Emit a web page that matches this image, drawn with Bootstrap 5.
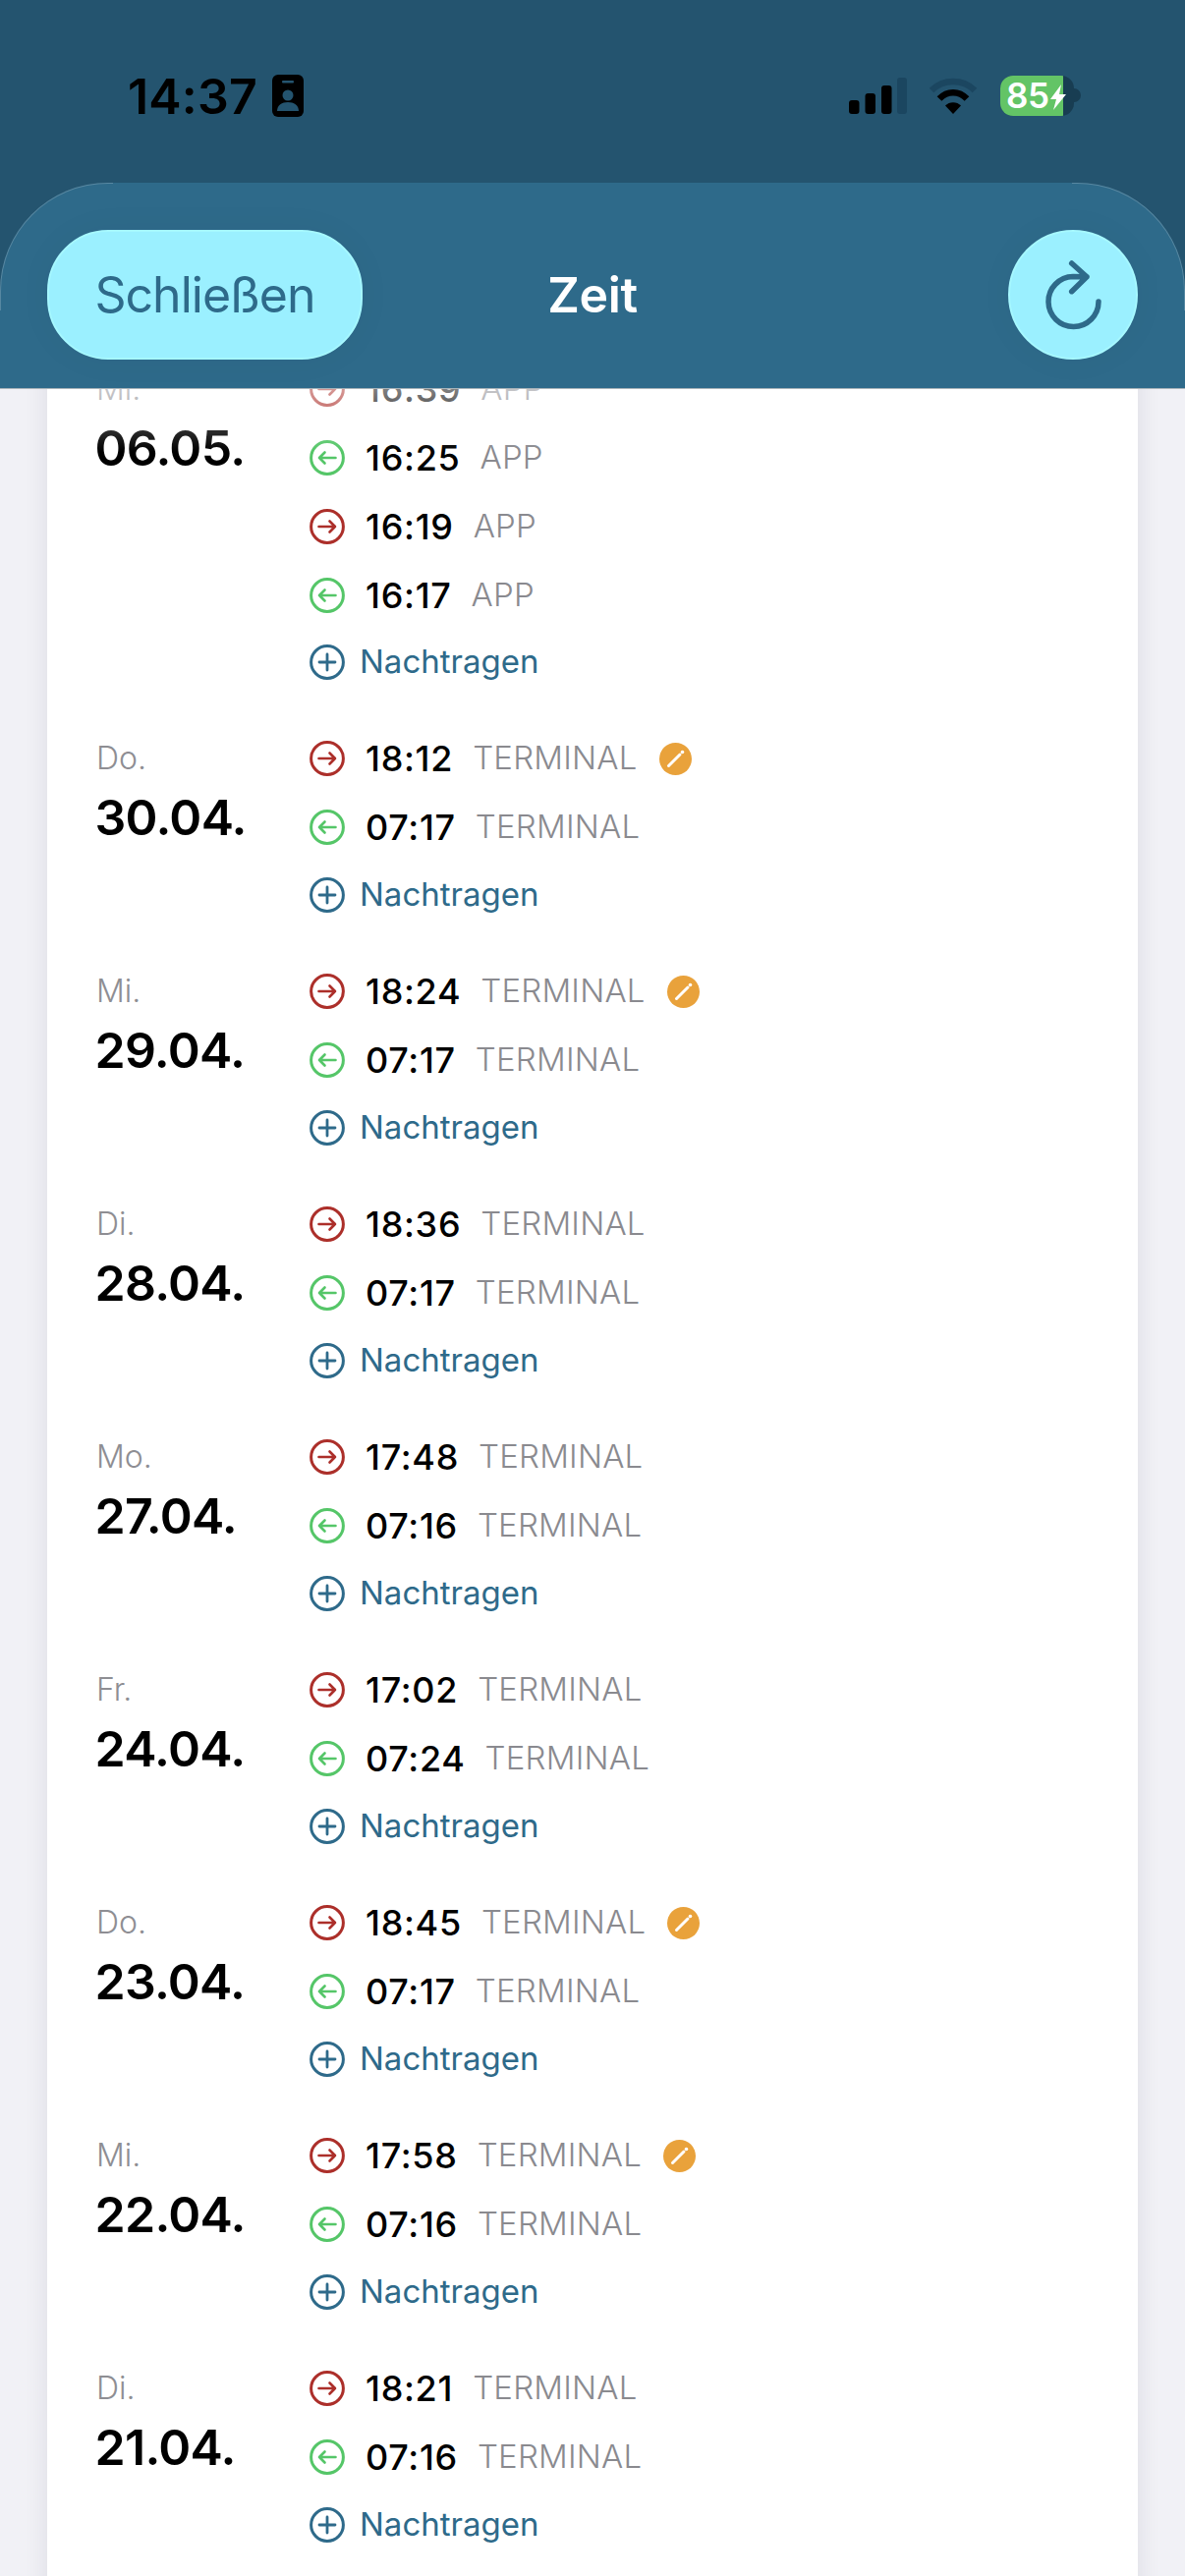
<!DOCTYPE html>
<html lang="de">
<head>
<meta charset="UTF-8" />
<meta name="viewport" content="width=device-width, initial-scale=1" />
<title>Zeit</title>
<link href="https://cdn.jsdelivr.net/npm/bootstrap@5.3.0/dist/css/bootstrap.min.css" rel="stylesheet" />
<style>
    html, body { height: 2622px; overflow: hidden; }
    body { background: #f1f1f6; font-family: Inter, "Liberation Sans", sans-serif; color: #000; }
    .status-bar { background: #24546f; height: 186px; padding: 76px 106px 0 130px; }
    .clock { font-size: 50px; font-weight: 600; line-height: 44px; letter-spacing: .2px; width: 147px; }
    .batt { width: 75px; height: 41px; border-radius: 13px; overflow: hidden; background: #183d52; margin-top: 1px; }
    .batt-fill { position: absolute; left: 0; top: 0; bottom: 0; width: 64px; background: #63c466; }
    .batt-num { position: relative; color: #fff; font-size: 35px; font-weight: 600; line-height: 41px; padding-left: 6px; letter-spacing: -.5px; }
    .batt-bolt { position: absolute; left: 50px; top: 9px; }
    .batt-wrap { position: relative; }
    .batt-nub { width: 7px; height: 14px; background: #183d52; border-radius: 0 7px 7px 0; margin: 14px 0 0 0; }
    .head-panel { background: #2e6a8a; height: 210px; border-radius: 110px 110px 0 0; padding: 48px 48px 0; position: relative; border-bottom: 1px solid #a9b4ba; z-index: 3; }
    .status-wrap { background: #24546f; position: relative; z-index: 3; }
    .head-panel::before, .head-panel::after { content: ""; position: absolute; top: 0; width: 115px; height: 130px; border-top: 1px solid rgba(255,255,255,.2); }
    .head-panel::before { left: 0; border-left: 1px solid rgba(255,255,255,.2); border-top-left-radius: 110px; }
    .head-panel::after { right: 0; border-right: 1px solid rgba(255,255,255,.2); border-top-right-radius: 110px; }
    .head-grid { display: grid; grid-template-columns: 1fr auto 1fr; align-items: center; }
    .btn-close-pill { background: #9bf0ff; border: 2px solid #a6f8ff; color: #2e6a8a; width: 321px; height: 132px; border-radius: 62px; font-size: 50px; font-weight: 400; padding: 0; letter-spacing: -1px; box-shadow: 0 0 40px rgba(0,0,0,.03); }
    .btn-close-pill:hover { background: #9bf0ff; border-color: #a6f8ff; color: #2e6a8a; }
    .btn-refresh { background: #9bf0ff; border: 2px solid #a6f8ff; width: 132px; height: 132px; padding: 0; box-shadow: 0 0 40px rgba(0,0,0,.03); }
    .btn-refresh:hover { background: #9bf0ff; border-color: #a6f8ff; }
    .head-title { color: #fff; font-size: 50px; font-weight: 600; line-height: 60px; letter-spacing: -.4px; }
    .content-clip { height: 2226px; overflow: hidden; position: relative; padding: 0 48px; }
    .top-haze { position: absolute; left: 48px; right: 48px; top: 0; height: 64px; background: linear-gradient(rgba(255,255,255,.5), rgba(255,255,255,0)); z-index: 2; }
    .day-card { margin-top: -35px; padding-left: 50px; box-shadow: 0 0 24px rgba(0,0,40,.09); min-height: 2400px; }
    .day-block { padding-bottom: 29px; }
    .day-left { width: 217px; flex: none; }
    .day-name { font-size: 32px; line-height: 70px; font-weight: 300; color: #8e8e93; height: 70px; }
    .day-date { font-size: 50px; line-height: 50px; font-weight: 600; letter-spacing: -.7px; margin-left: -1.500px; }
    .stamp { height: 70px; }
    .stamp-add { height: 68px; color: #2e6a8a; }
    .stamp-last { height: 69px; }
    .round-ic { width: 36px; height: 36px; flex: none; }
    .stamp-time { font-size: 36px; font-weight: 500; margin-left: 21px; letter-spacing: .7px; }
    .stamp-src { font-size: 33px; font-weight: 300; color: #8a8a8f; margin-left: 20px; letter-spacing: .2px; }
    .stamp-add span { font-size: 33px; font-weight: 400; margin-left: 15px; }
    .edit-dot { width: 33px; height: 33px; flex: none; margin-left: 22px; }
</style>
</head>
<body>

<svg width="0" height="0" class="position-absolute">
    <symbol id="ic-out" viewBox="0 0 36 36"><circle cx="18" cy="18" r="16.4" fill="none" stroke="#ac2f2a" stroke-width="3"/><path d="M9.500 18H26M20.500 12.500 26 18l-5.500 5.500" fill="none" stroke="#ac2f2a" stroke-width="2.600" stroke-linecap="round" stroke-linejoin="round"/></symbol>
    <symbol id="ic-in" viewBox="0 0 36 36"><circle cx="18" cy="18" r="16.4" fill="none" stroke="#55c668" stroke-width="3"/><path d="M26.500 18H10M15.500 12.500 10 18l5.500 5.500" fill="none" stroke="#55c668" stroke-width="2.600" stroke-linecap="round" stroke-linejoin="round"/></symbol>
    <symbol id="ic-add" viewBox="0 0 36 36"><circle cx="18" cy="18" r="16.4" fill="none" stroke="#2e6a8a" stroke-width="3"/><path d="M18 10v16M10 18h16" fill="none" stroke="#2e6a8a" stroke-width="2.800" stroke-linecap="round"/></symbol>
    <symbol id="ic-edit" viewBox="0 0 33 33"><circle cx="16.500" cy="16.500" r="16.500" fill="#e9a23b"/><path d="M9.500 23.500 21 12" stroke="#fff" stroke-width="3" stroke-linecap="round"/><circle cx="23.500" cy="9.500" r="1.800" fill="#fff"/></symbol>
</svg>

<div class="status-wrap">
    <div class="status-bar d-flex justify-content-between align-items-start">
        <div class="d-flex align-items-start">
            <span class="clock">14:37</span>
            <svg width="32" height="43" viewBox="0 0 32 43"><rect width="32" height="43" rx="6" fill="#000"/><rect x="10" y="6" width="12" height="2.500" rx="1" fill="#24546f"/><circle cx="16" cy="21" r="5.500" fill="#24546f"/><path d="M5 37c0-6 5-9 11-9s11 3 11 9H5z" fill="#24546f"/></svg>
        </div>
        <div class="d-flex align-items-start">
            <svg width="59" height="37" viewBox="0 0 59 37" style="margin-top:3px"><rect x="0" y="23" width="10.500" height="14" rx="3" fill="#000"/><rect x="16.500" y="16" width="10.500" height="21" rx="3" fill="#000"/><rect x="33" y="8" width="10.500" height="29" rx="3" fill="#000"/><rect x="49" y="0" width="10" height="37" rx="3" fill="#1b4660"/></svg>
            <svg width="50" height="37" viewBox="0 0 50 37" style="margin:3px 23px 0 22px"><path d="M3 13C15 1 35 1 47 13" fill="none" stroke="#1b4660" stroke-width="6.500"/><path d="M11 21.500C19 13 31 13 39 21.500" fill="none" stroke="#000" stroke-width="6.500"/><path d="M25 37 17 28.500C21 24 29 24 33 28.500z" fill="#000"/></svg>
            <div class="batt batt-wrap">
                <div class="batt-fill"></div>
                <div class="batt-num">85</div>
                <svg class="batt-bolt" width="18" height="26" viewBox="0 0 18 26"><path d="M12 0 1 15h6l-3 11 13-16h-7z" fill="#fff"/></svg>
            </div>
            <div class="batt-nub"></div>
        </div>
    </div>
    <div class="head-panel">
        <div class="head-grid">
            <div><button type="button" class="btn btn-close-pill">Schließen</button></div>
            <div class="head-title">Zeit</div>
            <div class="text-end">
                <button type="button" class="btn btn-refresh rounded-circle" aria-label="Aktualisieren">
                    <svg width="128" height="128" viewBox="2 2 128 128" class="d-block"><path d="M92 73A25.500 25.500 0 1 1 66 47.500L80 47.700M64.700 34 80 47.700 64.700 62.700" fill="none" stroke="#2e6a8a" stroke-width="5.500" stroke-linecap="round" stroke-linejoin="round"/></svg>
                </button>
            </div>
        </div>
    </div>
</div>

<main class="content-clip">
    <div class="top-haze"></div>
    <div class="card rounded-0 border-0 day-card">

        <div class="day-block d-flex">
            <div class="day-left"><div class="day-name">Mi.</div><div class="day-date">06.05.</div></div>
            <div>
                <div class="stamp d-flex align-items-center"><svg class="round-ic"><use href="#ic-out"/></svg><span class="stamp-time">16:39</span><span class="stamp-src">APP</span></div>
                <div class="stamp d-flex align-items-center"><svg class="round-ic"><use href="#ic-in"/></svg><span class="stamp-time">16:25</span><span class="stamp-src">APP</span></div>
                <div class="stamp d-flex align-items-center"><svg class="round-ic"><use href="#ic-out"/></svg><span class="stamp-time">16:19</span><span class="stamp-src">APP</span></div>
                <div class="stamp stamp-last d-flex align-items-center"><svg class="round-ic"><use href="#ic-in"/></svg><span class="stamp-time">16:17</span><span class="stamp-src">APP</span></div>
                <div class="stamp-add d-flex align-items-center"><svg class="round-ic"><use href="#ic-add"/></svg><span>Nachtragen</span></div>
            </div>
        </div>

        <div class="day-block d-flex">
            <div class="day-left"><div class="day-name">Do.</div><div class="day-date">30.04.</div></div>
            <div>
                <div class="stamp d-flex align-items-center"><svg class="round-ic"><use href="#ic-out"/></svg><span class="stamp-time">18:12</span><span class="stamp-src">TERMINAL</span><svg class="edit-dot"><use href="#ic-edit"/></svg></div>
                <div class="stamp d-flex align-items-center"><svg class="round-ic"><use href="#ic-in"/></svg><span class="stamp-time">07:17</span><span class="stamp-src">TERMINAL</span></div>
                <div class="stamp-add d-flex align-items-center"><svg class="round-ic"><use href="#ic-add"/></svg><span>Nachtragen</span></div>
            </div>
        </div>

        <div class="day-block d-flex">
            <div class="day-left"><div class="day-name">Mi.</div><div class="day-date">29.04.</div></div>
            <div>
                <div class="stamp d-flex align-items-center"><svg class="round-ic"><use href="#ic-out"/></svg><span class="stamp-time">18:24</span><span class="stamp-src">TERMINAL</span><svg class="edit-dot"><use href="#ic-edit"/></svg></div>
                <div class="stamp d-flex align-items-center"><svg class="round-ic"><use href="#ic-in"/></svg><span class="stamp-time">07:17</span><span class="stamp-src">TERMINAL</span></div>
                <div class="stamp-add d-flex align-items-center"><svg class="round-ic"><use href="#ic-add"/></svg><span>Nachtragen</span></div>
            </div>
        </div>

        <div class="day-block d-flex">
            <div class="day-left"><div class="day-name">Di.</div><div class="day-date">28.04.</div></div>
            <div>
                <div class="stamp d-flex align-items-center"><svg class="round-ic"><use href="#ic-out"/></svg><span class="stamp-time">18:36</span><span class="stamp-src">TERMINAL</span></div>
                <div class="stamp d-flex align-items-center"><svg class="round-ic"><use href="#ic-in"/></svg><span class="stamp-time">07:17</span><span class="stamp-src">TERMINAL</span></div>
                <div class="stamp-add d-flex align-items-center"><svg class="round-ic"><use href="#ic-add"/></svg><span>Nachtragen</span></div>
            </div>
        </div>

        <div class="day-block d-flex">
            <div class="day-left"><div class="day-name">Mo.</div><div class="day-date">27.04.</div></div>
            <div>
                <div class="stamp d-flex align-items-center"><svg class="round-ic"><use href="#ic-out"/></svg><span class="stamp-time">17:48</span><span class="stamp-src">TERMINAL</span></div>
                <div class="stamp d-flex align-items-center"><svg class="round-ic"><use href="#ic-in"/></svg><span class="stamp-time">07:16</span><span class="stamp-src">TERMINAL</span></div>
                <div class="stamp-add d-flex align-items-center"><svg class="round-ic"><use href="#ic-add"/></svg><span>Nachtragen</span></div>
            </div>
        </div>

        <div class="day-block d-flex">
            <div class="day-left"><div class="day-name">Fr.</div><div class="day-date">24.04.</div></div>
            <div>
                <div class="stamp d-flex align-items-center"><svg class="round-ic"><use href="#ic-out"/></svg><span class="stamp-time">17:02</span><span class="stamp-src">TERMINAL</span></div>
                <div class="stamp d-flex align-items-center"><svg class="round-ic"><use href="#ic-in"/></svg><span class="stamp-time">07:24</span><span class="stamp-src">TERMINAL</span></div>
                <div class="stamp-add d-flex align-items-center"><svg class="round-ic"><use href="#ic-add"/></svg><span>Nachtragen</span></div>
            </div>
        </div>

        <div class="day-block d-flex">
            <div class="day-left"><div class="day-name">Do.</div><div class="day-date">23.04.</div></div>
            <div>
                <div class="stamp d-flex align-items-center"><svg class="round-ic"><use href="#ic-out"/></svg><span class="stamp-time">18:45</span><span class="stamp-src">TERMINAL</span><svg class="edit-dot"><use href="#ic-edit"/></svg></div>
                <div class="stamp d-flex align-items-center"><svg class="round-ic"><use href="#ic-in"/></svg><span class="stamp-time">07:17</span><span class="stamp-src">TERMINAL</span></div>
                <div class="stamp-add d-flex align-items-center"><svg class="round-ic"><use href="#ic-add"/></svg><span>Nachtragen</span></div>
            </div>
        </div>

        <div class="day-block d-flex">
            <div class="day-left"><div class="day-name">Mi.</div><div class="day-date">22.04.</div></div>
            <div>
                <div class="stamp d-flex align-items-center"><svg class="round-ic"><use href="#ic-out"/></svg><span class="stamp-time">17:58</span><span class="stamp-src">TERMINAL</span><svg class="edit-dot"><use href="#ic-edit"/></svg></div>
                <div class="stamp d-flex align-items-center"><svg class="round-ic"><use href="#ic-in"/></svg><span class="stamp-time">07:16</span><span class="stamp-src">TERMINAL</span></div>
                <div class="stamp-add d-flex align-items-center"><svg class="round-ic"><use href="#ic-add"/></svg><span>Nachtragen</span></div>
            </div>
        </div>

        <div class="day-block d-flex">
            <div class="day-left"><div class="day-name">Di.</div><div class="day-date">21.04.</div></div>
            <div>
                <div class="stamp d-flex align-items-center"><svg class="round-ic"><use href="#ic-out"/></svg><span class="stamp-time">18:21</span><span class="stamp-src">TERMINAL</span></div>
                <div class="stamp d-flex align-items-center"><svg class="round-ic"><use href="#ic-in"/></svg><span class="stamp-time">07:16</span><span class="stamp-src">TERMINAL</span></div>
                <div class="stamp-add d-flex align-items-center"><svg class="round-ic"><use href="#ic-add"/></svg><span>Nachtragen</span></div>
            </div>
        </div>

    </div>
</main>

<script src="https://cdn.jsdelivr.net/npm/bootstrap@5.3.0/dist/js/bootstrap.bundle.min.js"></script>
</body>
</html>
